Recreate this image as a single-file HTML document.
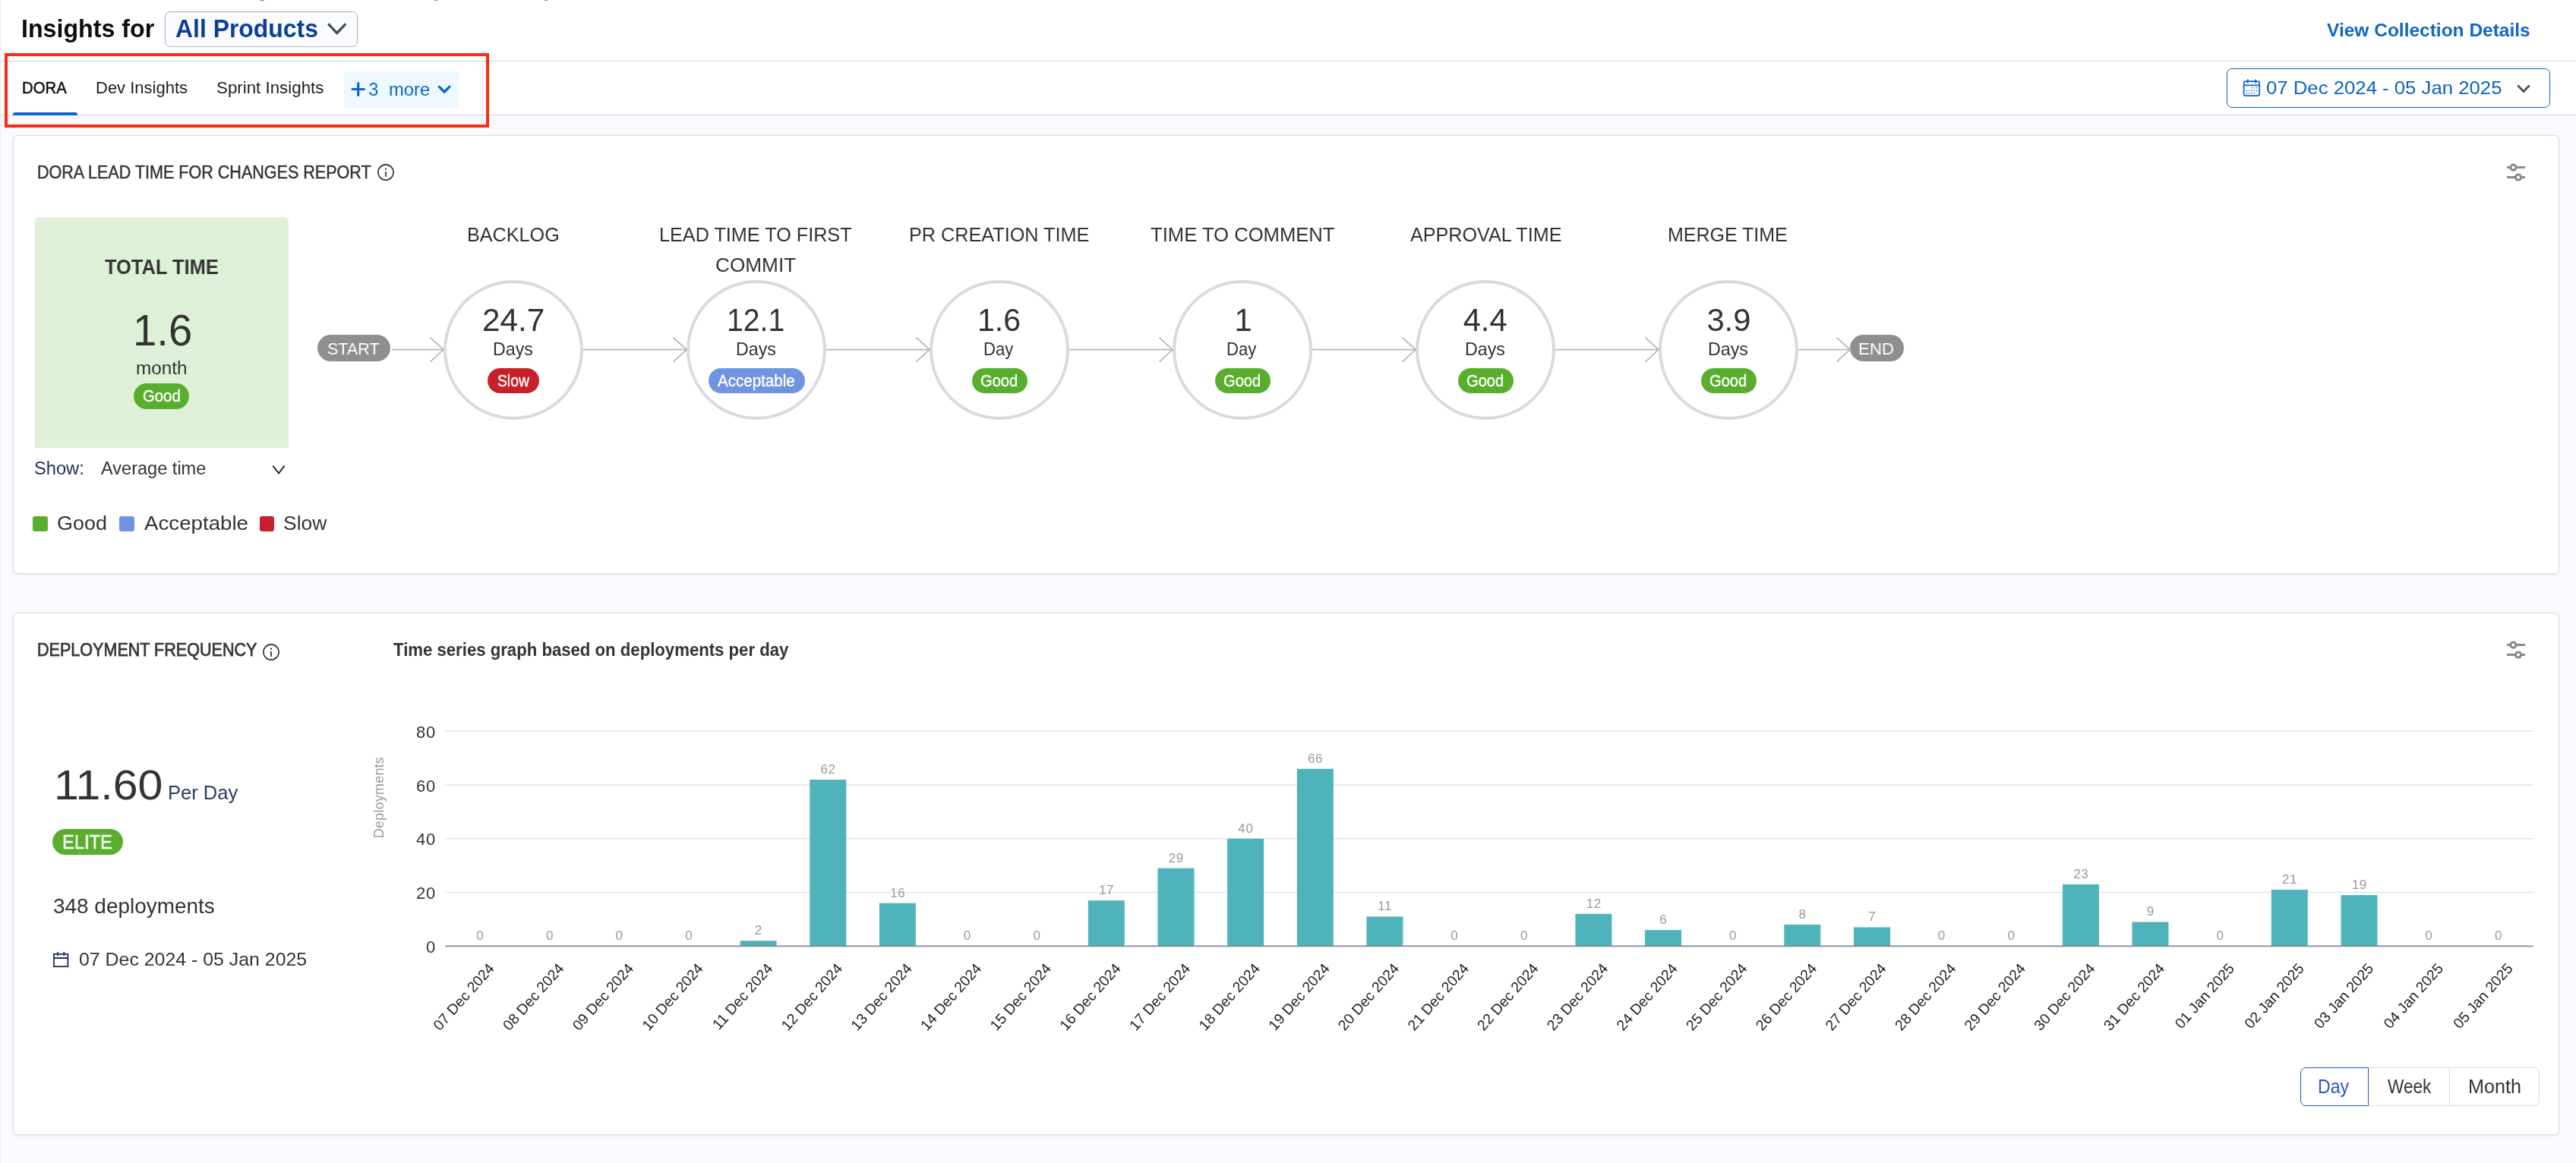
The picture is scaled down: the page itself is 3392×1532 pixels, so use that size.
<!DOCTYPE html>
<html lang="en"><head><meta charset="utf-8"><title>Insights - DORA</title>
<style>
html,body{margin:0;padding:0;}
body{width:3392px;height:1532px;overflow:hidden;background:#f9fafd;font-family:"Liberation Sans",sans-serif;}
#page{position:relative;width:3392px;height:1532px;overflow:hidden;will-change:transform;}
#page div,#page span.t,#page svg{position:absolute;box-sizing:border-box;}
.t{white-space:nowrap;display:block;transform-origin:0 50%;}
.card{background:#fff;border:1px solid #d9dce7;border-radius:6px;box-shadow:0 1px 3px rgba(40,41,61,0.10);}
.pill{border-radius:20px;}
.circle{border:4.5px solid #d8dae3;border-radius:50%;background:#fff;}
</style></head><body><div id="page">
<div class="hdr" style="left:0px;top:0px;width:3392px;height:80px;background:#fff;"></div>
<div class="ln" style="left:0px;top:80px;width:3392px;height:1px;background:#d3d5e2;"></div>
<div class="tabs" style="left:0px;top:81px;width:3392px;height:70px;background:#fff;"></div>
<div class="ln" style="left:0px;top:151px;width:3392px;height:1px;background:#d3d5e2;"></div>
<div class="ln" style="left:0px;top:0px;width:1px;height:1532px;background:#ececf2;"></div>
<div class="frag" style="left:342px;top:0px;width:6px;height:1px;background:#5b93dc;"></div>
<div class="frag" style="left:572px;top:0px;width:3.5px;height:1px;background:#5b93dc;"></div>
<div class="frag" style="left:717px;top:0px;width:3.5px;height:1px;background:#5b93dc;"></div>
<span id="t_ins" class="t" style="left:28.00px;top:20.01px;font-size:34px;line-height:34px;color:#0b0b12;font-weight:700;transform:scaleX(0.9465);">Insights for</span>
<div class="dd" style="left:217px;top:15px;width:254px;height:47px;background:#fafbfe;border:1.5px solid #b3b3b8;border-radius:7px;"></div>
<span id="t_all" class="t" style="left:230.80px;top:20.01px;font-size:34px;line-height:34px;color:#0a3f98;font-weight:700;transform:scaleX(0.9385);">All Products</span>
<svg style="left:426px;top:26px" width="36" height="24" viewBox="0 0 36 24"><path d="M6.2 5.4 L17.7 17.6 L29.2 5.4" fill="none" stroke="#3f4a5c" stroke-width="3.2" stroke-linecap="butt" stroke-linejoin="miter"/></svg>
<span id="t_view" class="t" style="left:3064.00px;top:28.01px;font-size:24.3px;line-height:24.3px;color:#1166c8;font-weight:700;transform:scaleX(1.0082);">View Collection Details</span>
<span id="t_dora" class="t" style="left:29.40px;top:105.01px;font-size:22px;line-height:22px;color:#0b0b12;-webkit-text-stroke:0.5px #0b0b12;transform:scaleX(0.9243);">DORA</span>
<div class="ul" style="left:17px;top:148px;width:85px;height:4px;background:#0b66c8;border-radius:3px 3px 0 0;"></div>
<span id="t_dev" class="t" style="left:126.00px;top:105.01px;font-size:22px;line-height:22px;color:#1c1c24;">Dev Insights</span>
<span id="t_spr" class="t" style="left:285.00px;top:105.01px;font-size:22px;line-height:22px;color:#1c1c24;transform:scaleX(1.0145);">Sprint Insights</span>
<div class="more" style="left:453px;top:94.2px;width:151px;height:47.5px;background:#edf9ff;"></div>
<svg style="left:460px;top:106px" width="24" height="24" viewBox="0 0 24 24"><path d="M11.7 3.6 V19.4 M4 11.5 H19.4" fill="none" stroke="#0d68c8" stroke-width="3.2" stroke-linecap="round"/></svg>
<span id="t_3" class="t" style="left:485.20px;top:106.70px;font-size:23.5px;line-height:23.5px;color:#0d68c8;">3</span>
<span id="t_more" class="t" style="left:511.80px;top:107.01px;font-size:23.5px;line-height:23.5px;color:#0d68c8;transform:scaleX(1.0121);">more</span>
<svg style="left:573px;top:108px" width="24" height="20" viewBox="0 0 24 20"><path d="M5.2 6.2 L12.1 13.2 L19 6.2" fill="none" stroke="#0d68c8" stroke-width="3.3" stroke-linecap="round" stroke-linejoin="miter"/></svg>
<div class="red" style="left:6px;top:70px;width:638px;height:98px;border:4px solid #f92b16;"></div>
<div class="date" style="left:2932px;top:90px;width:426px;height:52px;border:1.5px solid #0b62c4;border-radius:7px;background:#fff;"></div>
<svg style="left:2950px;top:102px" width="30" height="28" viewBox="0 0 30 28">
<g fill="none" stroke="#0b62c4" stroke-width="1.7"><rect x="4.6" y="5.2" width="20.6" height="19" rx="2.6"/><path d="M4.6 10.4 H25.2 M9.8 2.6 V7.6 M20 2.6 V7.6"/></g>
<g fill="#0b62c4"><circle cx="15" cy="13.8" r=".8"/><circle cx="18.4" cy="13.8" r=".8"/><circle cx="21.8" cy="13.8" r=".8"/>
<circle cx="8.2" cy="17.2" r=".8"/><circle cx="11.6" cy="17.2" r=".8"/><circle cx="15" cy="17.2" r=".8"/><circle cx="18.4" cy="17.2" r=".8"/><circle cx="21.8" cy="17.2" r=".8"/>
<circle cx="8.2" cy="20.6" r=".8"/><circle cx="11.6" cy="20.6" r=".8"/><circle cx="15" cy="20.6" r=".8"/><circle cx="18.4" cy="20.6" r=".8"/></g></svg>
<span id="t_date1" class="t" style="left:2984.00px;top:104.01px;font-size:24.4px;line-height:24.4px;color:#0b62c4;transform:scaleX(1.0551);">07 Dec 2024 - 05 Jan 2025</span>
<svg style="left:3311px;top:106px" width="24" height="22" viewBox="0 0 24 22"><path d="M5 7.2 L12 14.4 L19 7.2" fill="none" stroke="#4f5162" stroke-width="2.8" stroke-linecap="round" stroke-linejoin="miter"/></svg>
<div class="card" style="left:17px;top:178px;width:3353px;height:577.5px;"></div>
<span id="t_h1" class="t" style="left:49.20px;top:216.01px;font-size:23.7px;line-height:23.7px;color:#363636;-webkit-text-stroke:0.5px #363636;transform:scaleX(0.9093);">DORA LEAD TIME FOR CHANGES REPORT</span>
<svg style="left:495px;top:214.1px" width="26" height="26" viewBox="0 0 26 26"><circle cx="13" cy="13" r="10.1" fill="none" stroke="#303030" stroke-width="1.6"/><circle cx="13" cy="8.7" r="1.15" fill="#303030"/><path d="M13 11.9 V18.8" stroke="#303030" stroke-width="1.7"/></svg>
<svg style="left:3299px;top:214px" width="30" height="28" viewBox="0 0 30 28"><g fill="none" stroke="#8a8a8a" stroke-width="3">
<path d="M2 6.6 H6.2 M14.6 6.6 H26"/><circle cx="10.4" cy="6.6" r="3.6"/><path d="M2 19.6 H12.8 M21.2 19.6 H26"/><circle cx="17" cy="19.6" r="3.6"/></g></svg>
<div class="tot" style="left:46px;top:286px;width:334px;height:303.5px;background:#dff0d8;border-radius:6px 6px 0 0;"></div>
<span id="t_tt" class="t" style="left:138.00px;top:339.00px;font-size:27px;line-height:27px;color:#333;font-weight:700;transform:scaleX(0.9420);">TOTAL TIME</span>
<span id="t_16" class="t" style="left:174.60px;top:408.01px;font-size:56.5px;line-height:56.5px;color:#333;transform:scaleX(0.9950);">1.6</span>
<span id="t_month" class="t" style="left:178.60px;top:474.01px;font-size:23px;line-height:23px;color:#333;transform:scaleX(1.0570);">month</span>
<div class="pill" style="left:176px;top:505px;width:73px;height:34px;background:#5aae2e;"></div>
<span id="t_good0" class="t" style="left:187.50px;top:511.01px;font-size:21.2px;line-height:21.2px;color:#fff;-webkit-text-stroke:0.35px #fff;transform:scaleX(0.9595);">Good</span>
<div class="pill" style="left:417.7px;top:441px;width:96.3px;height:35px;background:#8f8f8f;"></div>
<span id="t_start" class="t" style="left:430.80px;top:449.01px;font-size:22.5px;line-height:22.5px;color:#fff;transform:scaleX(0.9562);">START</span>
<div class="pill" style="left:2435.7px;top:441px;width:71.3px;height:35px;background:#8f8f8f;"></div>
<span id="t_end" class="t" style="left:2446.60px;top:449.01px;font-size:22.5px;line-height:22.5px;color:#fff;transform:scaleX(0.9872);">END</span>
<span id="t_st0" class="t" style="left:615.00px;top:297.01px;font-size:25.4px;line-height:25.4px;color:#333;transform:scaleX(0.9918);">BACKLOG</span>
<div class="circle" style="left:584px;top:368.6px;width:184px;height:184px;"></div>
<span id="t_v0" class="t" style="left:634.55px;top:401.01px;font-size:41.7px;line-height:41.7px;color:#333;transform:scaleX(1.0157);">24.7</span>
<span id="t_u0" class="t" style="left:648.70px;top:448.01px;font-size:24px;line-height:24px;color:#333;transform:scaleX(0.9669);">Days</span>
<div class="pill" style="left:642.0px;top:485px;width:68px;height:33.4px;background:#c8202b;"></div>
<span id="t_p0" class="t" style="left:654.90px;top:491.00px;font-size:21.2px;line-height:21.2px;color:#fff;-webkit-text-stroke:0.35px #fff;transform:scaleX(0.9107);">Slow</span>
<span id="t_st1" class="t" style="left:868.20px;top:297.01px;font-size:25.4px;line-height:25.4px;color:#333;transform:scaleX(0.9930);">LEAD TIME TO FIRST</span>
<span id="t_st1b" class="t" style="left:942.20px;top:337.01px;font-size:25.4px;line-height:25.4px;color:#333;transform:scaleX(1.0311);">COMMIT</span>
<div class="circle" style="left:904px;top:368.6px;width:184px;height:184px;"></div>
<span id="t_v1" class="t" style="left:956.50px;top:401.01px;font-size:41.7px;line-height:41.7px;color:#333;transform:scaleX(0.9383);">12.1</span>
<span id="t_u1" class="t" style="left:968.70px;top:448.01px;font-size:24px;line-height:24px;color:#333;transform:scaleX(0.9669);">Days</span>
<div class="pill" style="left:932.5px;top:485px;width:127px;height:33.4px;background:#6f94e1;"></div>
<span id="t_p1" class="t" style="left:944.90px;top:491.00px;font-size:21.2px;line-height:21.2px;color:#fff;-webkit-text-stroke:0.35px #fff;transform:scaleX(0.9703);">Acceptable</span>
<span id="t_st2" class="t" style="left:1196.60px;top:297.01px;font-size:25.4px;line-height:25.4px;color:#333;transform:scaleX(0.9936);">PR CREATION TIME</span>
<div class="circle" style="left:1224px;top:368.6px;width:184px;height:184px;"></div>
<span id="t_v2" class="t" style="left:1286.60px;top:401.01px;font-size:41.7px;line-height:41.7px;color:#333;transform:scaleX(0.9856);">1.6</span>
<span id="t_u2" class="t" style="left:1295.35px;top:448.01px;font-size:24px;line-height:24px;color:#333;transform:scaleX(0.9198);">Day</span>
<div class="pill" style="left:1279.5px;top:485px;width:73px;height:33.4px;background:#5aae2e;"></div>
<span id="t_p2" class="t" style="left:1291.40px;top:491.00px;font-size:21.2px;line-height:21.2px;color:#fff;-webkit-text-stroke:0.35px #fff;transform:scaleX(0.9487);">Good</span>
<span id="t_st3" class="t" style="left:1515.20px;top:297.01px;font-size:25.4px;line-height:25.4px;color:#333;transform:scaleX(1.0094);">TIME TO COMMENT</span>
<div class="circle" style="left:1544px;top:368.6px;width:184px;height:184px;"></div>
<span id="t_v3" class="t" style="left:1625.55px;top:401.01px;font-size:41.7px;line-height:41.7px;color:#333;">1</span>
<span id="t_u3" class="t" style="left:1615.35px;top:448.01px;font-size:24px;line-height:24px;color:#333;transform:scaleX(0.9198);">Day</span>
<div class="pill" style="left:1599.5px;top:485px;width:73px;height:33.4px;background:#5aae2e;"></div>
<span id="t_p3" class="t" style="left:1611.40px;top:491.00px;font-size:21.2px;line-height:21.2px;color:#fff;-webkit-text-stroke:0.35px #fff;transform:scaleX(0.9487);">Good</span>
<span id="t_st4" class="t" style="left:1857.10px;top:297.01px;font-size:25.4px;line-height:25.4px;color:#333;transform:scaleX(0.9906);">APPROVAL TIME</span>
<div class="circle" style="left:1864px;top:368.6px;width:184px;height:184px;"></div>
<span id="t_v4" class="t" style="left:1926.65px;top:401.01px;font-size:41.7px;line-height:41.7px;color:#333;">4.4</span>
<span id="t_u4" class="t" style="left:1928.70px;top:448.01px;font-size:24px;line-height:24px;color:#333;transform:scaleX(0.9669);">Days</span>
<div class="pill" style="left:1919.5px;top:485px;width:73px;height:33.4px;background:#5aae2e;"></div>
<span id="t_p4" class="t" style="left:1931.40px;top:491.00px;font-size:21.2px;line-height:21.2px;color:#fff;-webkit-text-stroke:0.35px #fff;transform:scaleX(0.9487);">Good</span>
<span id="t_st5" class="t" style="left:2196.40px;top:297.01px;font-size:25.4px;line-height:25.4px;color:#333;transform:scaleX(0.9833);">MERGE TIME</span>
<div class="circle" style="left:2184px;top:368.6px;width:184px;height:184px;"></div>
<span id="t_v5" class="t" style="left:2247.40px;top:401.01px;font-size:41.7px;line-height:41.7px;color:#333;">3.9</span>
<span id="t_u5" class="t" style="left:2248.70px;top:448.01px;font-size:24px;line-height:24px;color:#333;transform:scaleX(0.9669);">Days</span>
<div class="pill" style="left:2239.5px;top:485px;width:73px;height:33.4px;background:#5aae2e;"></div>
<span id="t_p5" class="t" style="left:2251.40px;top:491.00px;font-size:21.2px;line-height:21.2px;color:#fff;-webkit-text-stroke:0.35px #fff;transform:scaleX(0.9487);">Good</span>
<svg style="left:0;top:420px" width="2600" height="80" viewBox="0 420 2600 80"><g fill="none" stroke="#b7b7b7" stroke-width="1.8"><path d="M516 460.6 H584 M566.5 444.6 L584 460.6 L566.5 476.6"/><path d="M768 460.6 H904 M886.5 444.6 L904 460.6 L886.5 476.6"/><path d="M1088 460.6 H1224 M1206.5 444.6 L1224 460.6 L1206.5 476.6"/><path d="M1408 460.6 H1544 M1526.5 444.6 L1544 460.6 L1526.5 476.6"/><path d="M1728 460.6 H1864 M1846.5 444.6 L1864 460.6 L1846.5 476.6"/><path d="M2048 460.6 H2184 M2166.5 444.6 L2184 460.6 L2166.5 476.6"/><path d="M2368 460.6 H2436 M2418.5 444.6 L2436 460.6 L2418.5 476.6"/></g></svg>
<span id="t_show" class="t" style="left:45.40px;top:606.00px;font-size:23.3px;line-height:23.3px;color:#1f2c56;transform:scaleX(1.0161);">Show:</span>
<span id="t_avg" class="t" style="left:133.00px;top:606.00px;font-size:23.3px;line-height:23.3px;color:#333;transform:scaleX(1.0110);">Average time</span>
<svg style="left:354px;top:608px" width="26" height="22" viewBox="0 0 26 22"><path d="M5.4 5.6 L13 15.6 L20.6 5.6" fill="none" stroke="#1b1b1b" stroke-width="1.8"/></svg>
<div class="sq" style="left:43px;top:680px;width:20px;height:19.5px;background:#5aae2e;border-radius:3px;"></div>
<span id="t_lg" class="t" style="left:75.00px;top:677.00px;font-size:25.5px;line-height:25.5px;color:#333;transform:scaleX(1.0571);">Good</span>
<div class="sq" style="left:157px;top:680px;width:19.5px;height:19.5px;background:#6f94e1;border-radius:3px;"></div>
<span id="t_la" class="t" style="left:189.60px;top:677.00px;font-size:25.5px;line-height:25.5px;color:#333;transform:scaleX(1.0858);">Acceptable</span>
<div class="sq" style="left:341.6px;top:680px;width:19.5px;height:19.5px;background:#c8202b;border-radius:3px;"></div>
<span id="t_ls" class="t" style="left:373.00px;top:677.00px;font-size:25.5px;line-height:25.5px;color:#333;transform:scaleX(1.0364);">Slow</span>
<div class="card" style="left:17px;top:807px;width:3353px;height:687.5px;"></div>
<span id="t_h2" class="t" style="left:49.20px;top:845.00px;font-size:23.4px;line-height:23.4px;color:#363636;-webkit-text-stroke:0.75px #363636;transform:scaleX(0.9215);">DEPLOYMENT FREQUENCY</span>
<svg style="left:344px;top:845.8px" width="26" height="26" viewBox="0 0 26 26"><circle cx="13" cy="13" r="10.1" fill="none" stroke="#303030" stroke-width="1.6"/><circle cx="13" cy="8.7" r="1.15" fill="#303030"/><path d="M13 11.9 V18.8" stroke="#303030" stroke-width="1.7"/></svg>
<span id="t_ts" class="t" style="left:517.60px;top:844.01px;font-size:24.7px;line-height:24.7px;color:#333;font-weight:700;transform:scaleX(0.8974);">Time series graph based on deployments per day</span>
<svg style="left:3299px;top:842.9px" width="30" height="28" viewBox="0 0 30 28"><g fill="none" stroke="#8a8a8a" stroke-width="3">
<path d="M2 6.6 H6.2 M14.6 6.6 H26"/><circle cx="10.4" cy="6.6" r="3.6"/><path d="M2 19.6 H12.8 M21.2 19.6 H26"/><circle cx="17" cy="19.6" r="3.6"/></g></svg>
<span id="t_1160" class="t" style="left:71.40px;top:1007.01px;font-size:55.6px;line-height:55.6px;color:#333;transform:scaleX(1.0625);">11.60</span>
<span id="t_pd" class="t" style="left:221.30px;top:1031.00px;font-size:26.2px;line-height:26.2px;color:#2a3a64;transform:scaleX(0.9756);">Per Day</span>
<div class="pill" style="left:69px;top:1092px;width:92.8px;height:34px;background:#5aae2e;"></div>
<span id="t_elite" class="t" style="left:81.80px;top:1097.00px;font-size:25.7px;line-height:25.7px;color:#fff;-webkit-text-stroke:0.5px #fff;transform:scaleX(0.9227);">ELITE</span>
<span id="t_348" class="t" style="left:69.50px;top:1180.01px;font-size:27.4px;line-height:27.4px;color:#333;transform:scaleX(1.0199);">348 deployments</span>
<svg style="left:66px;top:1250px" width="30" height="28" viewBox="0 0 30 28"><g fill="none" stroke="#1f2f57" stroke-width="1.8"><rect x="5" y="6.8" width="18.4" height="16.4"/><path d="M5 12 H23.4 M10 4 V9 M18.3 4 V9"/></g></svg>
<span id="t_date2" class="t" style="left:104.10px;top:1252.01px;font-size:24.4px;line-height:24.4px;color:#333;transform:scaleX(1.0201);">07 Dec 2024 - 05 Jan 2025</span>
<svg style="left:0;top:900px;font-family:&quot;Liberation Sans&quot;, sans-serif" width="3392" height="500" viewBox="0 900 3392 500"><g stroke="#e3e4e8" stroke-width="1.6"><path d="M586.2 1175.5 H3335.6"/><path d="M586.2 1104.8 H3335.6"/><path d="M586.2 1034.0 H3335.6"/><path d="M586.2 963.3 H3335.6"/></g><g fill="#4fb3bb"><rect x="974.6" y="1239.2" width="48" height="7.1"/><rect x="1066.3" y="1027.0" width="48" height="219.3"/><rect x="1157.9" y="1189.7" width="48" height="56.6"/><rect x="1432.8" y="1186.2" width="48" height="60.1"/><rect x="1524.5" y="1143.7" width="48" height="102.6"/><rect x="1616.1" y="1104.8" width="48" height="141.5"/><rect x="1707.8" y="1012.8" width="48" height="233.5"/><rect x="1799.4" y="1207.4" width="48" height="38.9"/><rect x="2074.4" y="1203.8" width="48" height="42.5"/><rect x="2166.0" y="1225.1" width="48" height="21.2"/><rect x="2349.3" y="1218.0" width="48" height="28.3"/><rect x="2441.0" y="1221.5" width="48" height="24.8"/><rect x="2715.9" y="1164.9" width="48" height="81.4"/><rect x="2807.5" y="1214.5" width="48" height="31.8"/><rect x="2990.8" y="1172.0" width="48" height="74.3"/><rect x="3082.5" y="1179.1" width="48" height="67.2"/></g><path d="M586.2 1246.3 H3335.6" stroke="#7f8a9c" stroke-width="1.8"/><g font-size="22" fill="#333" text-anchor="end" letter-spacing="0.8"><text x="574" y="1254.9">0</text><text x="574" y="1184.1">20</text><text x="574" y="1113.4">40</text><text x="574" y="1042.6">60</text><text x="574" y="971.9">80</text></g><g font-size="17" fill="#999" text-anchor="middle" letter-spacing="0.6"><text x="632.3" y="1238.1">0</text><text x="724.0" y="1238.1">0</text><text x="815.6" y="1238.1">0</text><text x="907.3" y="1238.1">0</text><text x="998.9" y="1231.0">2</text><text x="1090.6" y="1018.8">62</text><text x="1182.2" y="1181.5">16</text><text x="1273.8" y="1238.1">0</text><text x="1365.5" y="1238.1">0</text><text x="1457.1" y="1178.0">17</text><text x="1548.8" y="1135.5">29</text><text x="1640.4" y="1096.6">40</text><text x="1732.1" y="1004.6">66</text><text x="1823.7" y="1199.2">11</text><text x="1915.4" y="1238.1">0</text><text x="2007.0" y="1238.1">0</text><text x="2098.7" y="1195.6">12</text><text x="2190.3" y="1216.9">6</text><text x="2282.0" y="1238.1">0</text><text x="2373.6" y="1209.8">8</text><text x="2465.3" y="1213.3">7</text><text x="2556.9" y="1238.1">0</text><text x="2648.6" y="1238.1">0</text><text x="2740.2" y="1156.7">23</text><text x="2831.8" y="1206.3">9</text><text x="2923.5" y="1238.1">0</text><text x="3015.1" y="1163.8">21</text><text x="3106.8" y="1170.9">19</text><text x="3198.4" y="1238.1">0</text><text x="3290.1" y="1238.1">0</text></g><g font-size="19.4" fill="#222" text-anchor="end" letter-spacing="0.0"><text transform="translate(652.0 1276.3) rotate(-48.5)">07 Dec 2024</text><text transform="translate(743.7 1276.3) rotate(-48.5)">08 Dec 2024</text><text transform="translate(835.3 1276.3) rotate(-48.5)">09 Dec 2024</text><text transform="translate(927.0 1276.3) rotate(-48.5)">10 Dec 2024</text><text transform="translate(1018.6 1276.3) rotate(-48.5)">11 Dec 2024</text><text transform="translate(1110.3 1276.3) rotate(-48.5)">12 Dec 2024</text><text transform="translate(1201.9 1276.3) rotate(-48.5)">13 Dec 2024</text><text transform="translate(1293.5 1276.3) rotate(-48.5)">14 Dec 2024</text><text transform="translate(1385.2 1276.3) rotate(-48.5)">15 Dec 2024</text><text transform="translate(1476.8 1276.3) rotate(-48.5)">16 Dec 2024</text><text transform="translate(1568.5 1276.3) rotate(-48.5)">17 Dec 2024</text><text transform="translate(1660.1 1276.3) rotate(-48.5)">18 Dec 2024</text><text transform="translate(1751.8 1276.3) rotate(-48.5)">19 Dec 2024</text><text transform="translate(1843.4 1276.3) rotate(-48.5)">20 Dec 2024</text><text transform="translate(1935.1 1276.3) rotate(-48.5)">21 Dec 2024</text><text transform="translate(2026.7 1276.3) rotate(-48.5)">22 Dec 2024</text><text transform="translate(2118.4 1276.3) rotate(-48.5)">23 Dec 2024</text><text transform="translate(2210.0 1276.3) rotate(-48.5)">24 Dec 2024</text><text transform="translate(2301.7 1276.3) rotate(-48.5)">25 Dec 2024</text><text transform="translate(2393.3 1276.3) rotate(-48.5)">26 Dec 2024</text><text transform="translate(2485.0 1276.3) rotate(-48.5)">27 Dec 2024</text><text transform="translate(2576.6 1276.3) rotate(-48.5)">28 Dec 2024</text><text transform="translate(2668.2 1276.3) rotate(-48.5)">29 Dec 2024</text><text transform="translate(2759.9 1276.3) rotate(-48.5)">30 Dec 2024</text><text transform="translate(2851.5 1276.3) rotate(-48.5)">31 Dec 2024</text><text transform="translate(2943.2 1276.3) rotate(-48.5)">01 Jan 2025</text><text transform="translate(3034.8 1276.3) rotate(-48.5)">02 Jan 2025</text><text transform="translate(3126.5 1276.3) rotate(-48.5)">03 Jan 2025</text><text transform="translate(3218.1 1276.3) rotate(-48.5)">04 Jan 2025</text><text transform="translate(3309.8 1276.3) rotate(-48.5)">05 Jan 2025</text></g><text transform="translate(505 1050.5) rotate(-90)" font-size="17.8" fill="#999" text-anchor="middle" letter-spacing="0.3">Deployments</text></svg>
<div class="btn" style="left:3117px;top:1406px;width:109.5px;height:50.5px;border:1.5px solid #d9dae5;border-left:none;background:#fff;"></div>
<div class="btn" style="left:3225px;top:1406px;width:118.5px;height:50.5px;border:1.5px solid #d9dae5;border-radius:0 7px 7px 0;background:#fff;"></div>
<div class="btn" style="left:3029px;top:1406px;width:90px;height:50.5px;border:1.5px solid #2b50d8;border-radius:7px 0 0 7px;background:#fff;"></div>
<span id="t_day" class="t" style="left:3052.40px;top:1419.01px;font-size:25.3px;line-height:25.3px;color:#2d54d0;transform:scaleX(0.9128);">Day</span>
<span id="t_week" class="t" style="left:3144.00px;top:1419.01px;font-size:25.3px;line-height:25.3px;color:#333;transform:scaleX(0.8942);">Week</span>
<span id="t_mon" class="t" style="left:3249.60px;top:1419.01px;font-size:25.3px;line-height:25.3px;color:#333;transform:scaleX(0.9943);">Month</span>
</div></body></html>
